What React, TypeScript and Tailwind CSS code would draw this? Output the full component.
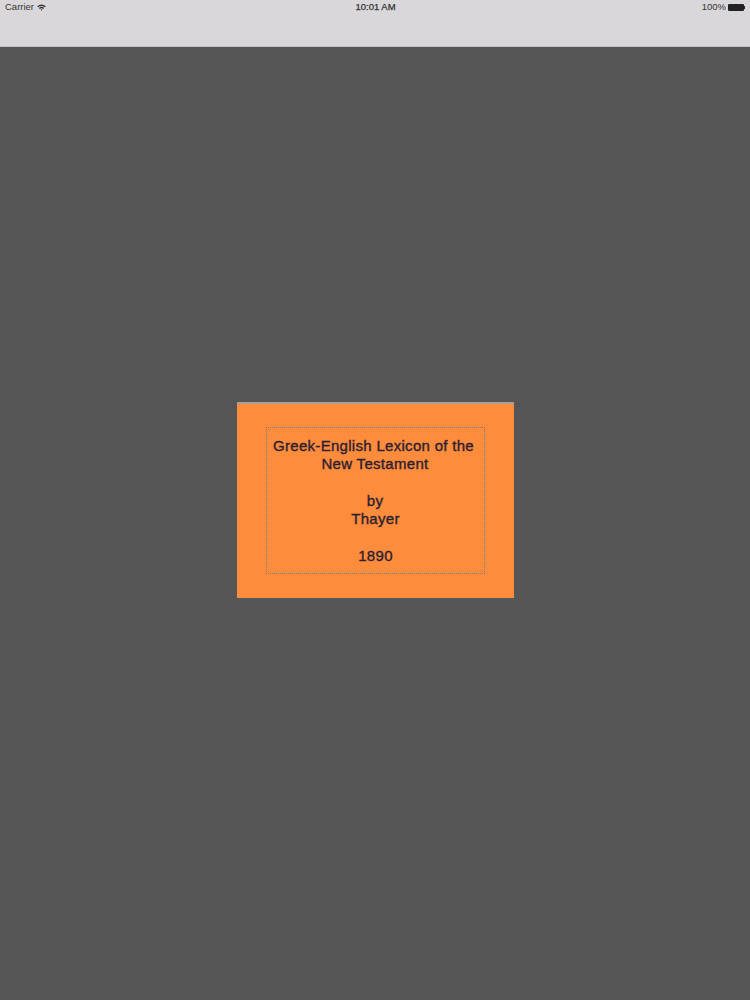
export default function App() {
  return (
    <div className="h-[1000px] flex flex-col bg-[#565556] font-['Liberation_Sans',Arial,sans-serif]">
      <header className="h-[47px] bg-[#d9d7da] border-b border-[#c4c2c5]">
        <div className="h-[15px] grid grid-cols-3 items-center px-[5px] text-[9.5px] text-[#333]">
          <div className="flex items-center gap-[3px]">
            <span>Carrier</span>
            <svg width="9" height="7" viewBox="0 0 10 8">
              <path d="M0 2.6 Q5 -1.4 10 2.6 L8.8 3.8 Q5 0.8 1.2 3.8 Z" fill="#333" />
              <path d="M2 4.5 Q5 2 8 4.5 L6.9 5.6 Q5 4.2 3.1 5.6 Z" fill="#333" />
              <path d="M3.9 6.4 Q5 5.6 6.1 6.4 L5 7.8 Z" fill="#333" />
            </svg>
          </div>
          <div className="text-center text-[9.5px] pl-[1px] [-webkit-text-stroke:0.25px_#333]">10:01 AM</div>
          <div className="flex items-center justify-end gap-[2px]">
            <span>100%</span>
            <div className="flex items-center">
              <div className="w-[16px] h-[7px] bg-[#222] rounded-[1px]" />
              <div className="w-[1px] h-[3px] bg-[#222]" />
            </div>
          </div>
        </div>
      </header>
      <main className="flex-1 flex justify-center pt-[355px]">
        <div className="w-[277px] h-[196px] bg-[#fd8c3c]">
          <div className="h-[2px] bg-[#a89f95]" />
          <div className="pt-[23px] px-[29px]">
            <div className="w-[219px] h-[147px] border border-dotted border-[#7f7b80] flex flex-col items-center pt-[9px] text-[15px] leading-[18.3px] tracking-[0.3px] text-[#2c2030] text-center [-webkit-text-stroke:0.35px_#2c2030]">
              <div className="pr-[3px]">Greek-English Lexicon of the</div>
              <div>New Testament</div>
              <div className="mt-[18.3px]">by</div>
              <div className="pl-[1px]">Thayer</div>
              <div className="mt-[18.3px] pl-[1px]">1890</div>
            </div>
          </div>
        </div>
      </main>
    </div>
  );
}
